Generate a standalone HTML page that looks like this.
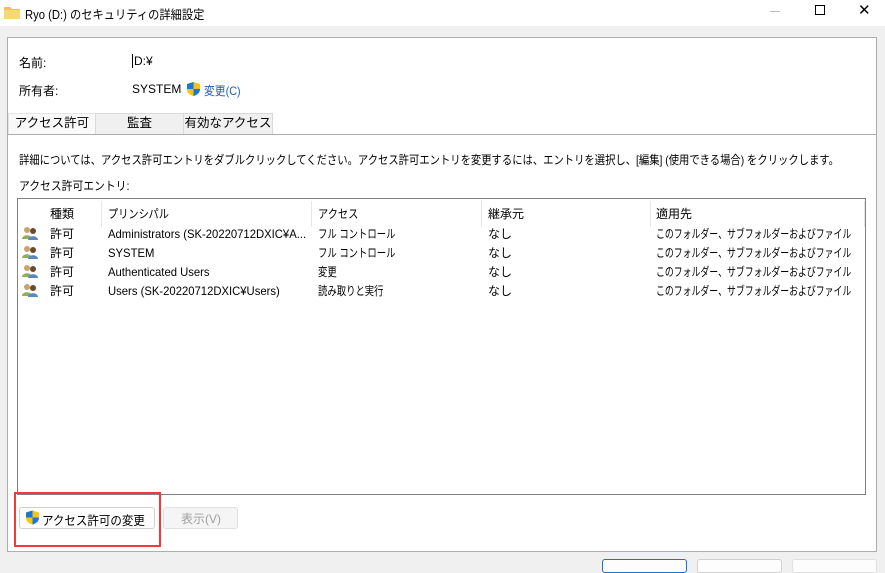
<!DOCTYPE html>
<html><head><meta charset="utf-8"><style>
*{margin:0;padding:0;box-sizing:border-box}
body{width:885px;height:565px;overflow:hidden;background:#f0f0f0;font-family:"Liberation Sans","Noto Sans CJK JP",sans-serif;font-size:12px;color:#000;position:relative}
.a{position:absolute;white-space:nowrap;transform-origin:0 0}
#title{left:0;top:0;width:885px;height:26px;background:#fff}
#panel{left:7px;top:37px;width:870px;height:515px;background:#fff;border:1px solid #adadad}
.tab{top:113px;height:21px;background:#f0f0f0;border:1px solid #d9d9d9;border-bottom:none;text-align:center;line-height:19px;font-size:12.5px}
#list{left:17px;top:198px;width:849px;height:297px;border:1px solid #828282;background:#fff}
.hs{top:201px;width:1px;height:26px;background:#e5e5e5}
.btn{height:22px;border:1px solid #d0d0d0;border-radius:3px;background:#fdfdfd}
</style></head><body>
<div class="a" id="title"></div>
<svg class="a" style="left:4px;top:5px" width="16" height="14" viewBox="0 0 16 14"><path d="M0 2h6l2 2h8v10H0z" fill="#f2c14e"/><path d="M0 5h16v9H0z" fill="#f8d775"/></svg>
<div class="a" style="left:25px;top:4px;font-size:12.5px;transform:scaleX(0.9)">Ryo (D:) のセキュリティの詳細設定</div>
<div class="a" style="left:770px;top:11px;width:10px;height:1px;background:#bbb"></div>
<div class="a" style="left:815px;top:5px;width:10px;height:10px;border:1px solid #000"></div>
<div class="a" style="left:858px;top:1px;font-size:15px">✕</div>
<div class="a" id="panel"></div>
<div class="a" style="left:19px;top:54px">名前:</div>
<div class="a" style="left:132px;top:54px;border-left:1px solid #000;padding-left:1px">D:¥</div>
<div class="a" style="left:19px;top:82px">所有者:</div>
<div class="a" style="left:132px;top:82px">SYSTEM</div>
<svg class="a" style="left:187px;top:82px" width="13" height="14" viewBox="0 0 13 14"><path d="M6.5 0L0 2v5c0 4 3 6 6.5 7C10 13 13 11 13 7V2z" fill="#f7c31b"/><path d="M6.5 0v7H0V2z M6.5 7H13c0 4-3 6-6.5 7z" fill="#1a78d1"/></svg>
<div class="a" style="left:204px;top:82px;color:#1a5fb4;transform:scaleX(0.9)">変更(C)</div>
<div class="a tab" style="left:8px;width:88px;background:#f9f9f9;border-color:#e5e5e5">アクセス許可</div>
<div class="a tab" style="left:95px;width:89px">監査</div>
<div class="a tab" style="left:183px;width:90px">有効なアクセス</div>
<div class="a" style="left:8px;top:134px;width:868px;height:1px;background:#adadad"></div>
<div class="a" style="left:19px;top:151px;transform:scaleX(0.86)">詳細については、アクセス許可エントリをダブルクリックしてください。アクセス許可エントリを変更するには、エントリを選択し、[編集] (使用できる場合) をクリックします。</div>
<div class="a" style="left:19px;top:177px;transform:scaleX(0.9)">アクセス許可エントリ:</div>
<div class="a" id="list"></div>
<div class="a hs" style="left:101px"></div><div class="a hs" style="left:311px"></div><div class="a hs" style="left:481px"></div><div class="a hs" style="left:650px"></div><div class="a hs" style="left:864px"></div>
<div class="a" style="left:50px;top:205px">種類</div>
<div class="a" style="left:108px;top:205px;transform:scaleX(0.85)">プリンシパル</div>
<div class="a" style="left:318px;top:205px;transform:scaleX(0.85)">アクセス</div>
<div class="a" style="left:488px;top:205px">継承元</div>
<div class="a" style="left:656px;top:205px">適用先</div>
<svg class="a" style="left:22px;top:226px" width="16" height="14"><circle cx="5" cy="4" r="3" fill="#c9a46a"/><path d="M0 13c0-5 10-5 10 0z" fill="#8fae5e"/><circle cx="11" cy="5" r="3" fill="#6b4a2b"/><path d="M6 14c0-5 10-5 10 0z" fill="#5b86c0"/></svg>
<svg class="a" style="left:22px;top:245px" width="16" height="14"><circle cx="5" cy="4" r="3" fill="#c9a46a"/><path d="M0 13c0-5 10-5 10 0z" fill="#8fae5e"/><circle cx="11" cy="5" r="3" fill="#6b4a2b"/><path d="M6 14c0-5 10-5 10 0z" fill="#5b86c0"/></svg>
<svg class="a" style="left:22px;top:264px" width="16" height="14"><circle cx="5" cy="4" r="3" fill="#c9a46a"/><path d="M0 13c0-5 10-5 10 0z" fill="#8fae5e"/><circle cx="11" cy="5" r="3" fill="#6b4a2b"/><path d="M6 14c0-5 10-5 10 0z" fill="#5b86c0"/></svg>
<svg class="a" style="left:22px;top:283px" width="16" height="14"><circle cx="5" cy="4" r="3" fill="#c9a46a"/><path d="M0 13c0-5 10-5 10 0z" fill="#8fae5e"/><circle cx="11" cy="5" r="3" fill="#6b4a2b"/><path d="M6 14c0-5 10-5 10 0z" fill="#5b86c0"/></svg>
<div class="a" style="left:50px;top:225px;line-height:19px">許可<br>許可<br>許可<br>許可</div>
<div class="a" style="left:108px;top:225px;line-height:19px;transform:scaleX(0.94)">Administrators (SK-20220712DXIC¥A...<br>SYSTEM<br>Authenticated Users<br>Users (SK-20220712DXIC¥Users)</div>
<div class="a" style="left:318px;top:225px;line-height:19px;transform:scaleX(0.78)">フル コントロール<br>フル コントロール<br>変更<br>読み取りと実行</div>
<div class="a" style="left:488px;top:225px;line-height:19px">なし<br>なし<br>なし<br>なし</div>
<div class="a" style="left:656px;top:225px;line-height:19px;transform:scaleX(0.74)">このフォルダー、サブフォルダーおよびファイル<br>このフォルダー、サブフォルダーおよびファイル<br>このフォルダー、サブフォルダーおよびファイル<br>このフォルダー、サブフォルダーおよびファイル</div>
<div class="a btn" style="left:19px;top:507px;width:136px"></div>
<svg class="a" style="left:26px;top:510px" width="13" height="15" viewBox="0 0 13 14"><path d="M6.5 0L0 2v5c0 4 3 6 6.5 7C10 13 13 11 13 7V2z" fill="#f7c31b"/><path d="M6.5 0v7H0V2z M6.5 7H13c0 4-3 6-6.5 7z" fill="#1a78d1"/></svg>
<div class="a" style="left:42px;top:510px;font-size:12.5px;transform:scaleX(0.92)">アクセス許可の変更</div>
<div class="a btn" style="left:163px;top:507px;width:75px;background:#f5f5f5;border-color:#e0e0e0"></div>
<div class="a" style="left:181px;top:510px;color:#a0a0a0">表示(V)</div>
<div class="a" style="left:14px;top:492px;width:147px;height:55px;border:2px solid #f03a3a"></div>
<div class="a btn" style="left:602px;top:559px;width:85px;height:14px;border:1px solid #1a6fd0"></div>
<div class="a btn" style="left:697px;top:559px;width:85px;height:14px"></div>
<div class="a btn" style="left:792px;top:559px;width:85px;height:14px;border-color:#e0e0e0"></div>
</body></html>
